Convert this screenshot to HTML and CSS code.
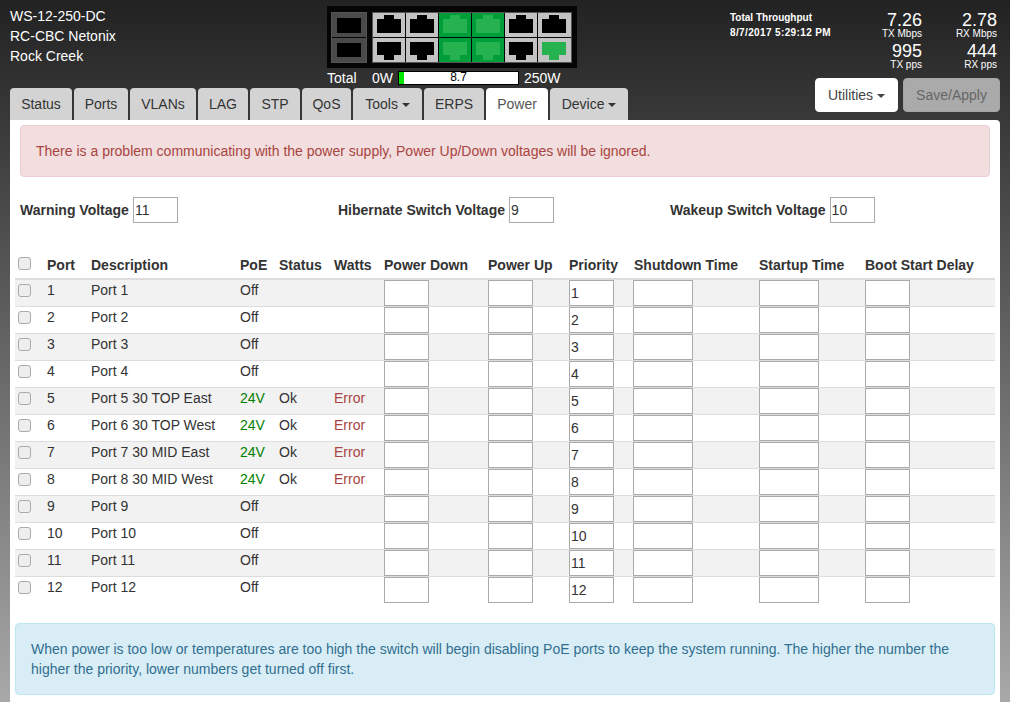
FILE: index.html
```html
<!DOCTYPE html>
<html lang="en">
<head>
<meta charset="utf-8">
<title>WS-12-250-DC</title>
<link rel="stylesheet" href="styles.css">
</head>
<body>
<header class="top">
  <div class="device">
    <div>WS-12-250-DC</div>
    <div>RC-CBC Netonix</div>
    <div>Rock Creek</div>
  </div>
  <div class="switch">
    <svg class="switch-art" width="250" height="62" viewBox="0 0 250 62">
      <defs>
        <path id="up" d="M4 13H11V9H21V13H28V27H4Z"/>
        <path id="down" d="M4 4H28V17H21V22H11V17H4Z"/>
      </defs>
      <rect width="250" height="62" fill="#050505"/>
      <rect x="4.5" y="6.5" width="35" height="50" fill="none" stroke="#555"/>
      <rect x="45.5" y="6.5" width="199" height="50" fill="none" stroke="#555"/>
      <g fill="#4a4a4a">
        <rect x="5" y="7" width="34" height="24"/>
        <rect x="5" y="32" width="34" height="24"/>
      </g>
      <g fill="#000">
        <rect x="10" y="12" width="24" height="15"/>
        <rect x="10" y="37" width="24" height="14"/>
      </g>
      <g fill="#c3c3c3">
        <rect x="46" y="7" width="32" height="24"/>
        <rect x="79" y="7" width="32" height="24"/>
        <rect x="46" y="32" width="32" height="24"/>
        <rect x="79" y="32" width="32" height="24"/>
        <rect x="178" y="7" width="32" height="24"/>
        <rect x="211" y="7" width="33" height="24"/>
        <rect x="178" y="32" width="32" height="24"/>
        <rect x="211" y="32" width="33" height="24"/>
      </g>
      <g fill="#009e3a">
        <rect x="112" y="7" width="32" height="24"/>
        <rect x="145" y="7" width="32" height="24"/>
        <rect x="112" y="32" width="32" height="24"/>
        <rect x="145" y="32" width="32" height="24"/>
      </g>
      <g fill="#000">
        <use href="#up" x="46" y="0"/>
        <use href="#up" x="79" y="0"/>
        <use href="#up" x="178" y="0"/>
        <use href="#up" x="211" y="0"/>
        <use href="#down" x="46" y="32"/>
        <use href="#down" x="79" y="32"/>
        <use href="#down" x="178" y="32"/>
      </g>
      <g fill="#25b24f">
        <use href="#up" x="112" y="0"/>
        <use href="#up" x="145" y="0"/>
        <use href="#down" x="112" y="32"/>
        <use href="#down" x="145" y="32"/>
        <use href="#down" x="211" y="32"/>
      </g>
    </svg>
    <div class="power-row">
      <span class="power-total">Total</span>
      <span class="power-min">0W</span>
      <div class="power-bar"><div class="power-fill"></div><span class="power-value">8.7</span></div>
      <span class="power-max">250W</span>
    </div>
  </div>
  <div class="throughput">
    <div class="tp-title">
      <div>Total Throughput</div>
      <div class="tp-date">8/7/2017 5:29:12 PM</div>
    </div>
    <div class="tp-stats">
      <div class="stat"><div class="stat-num">7.26</div><div class="stat-label">TX Mbps</div></div>
      <div class="stat"><div class="stat-num">2.78</div><div class="stat-label">RX Mbps</div></div>
      <div class="stat"><div class="stat-num">995</div><div class="stat-label">TX pps</div></div>
      <div class="stat"><div class="stat-num">444</div><div class="stat-label">RX pps</div></div>
    </div>
  </div>
</header>
<nav class="navrow">
  <ul class="tabs">
    <li class="tab tab-status">Status</li>
    <li class="tab tab-ports">Ports</li>
    <li class="tab tab-vlans">VLANs</li>
    <li class="tab tab-lag">LAG</li>
    <li class="tab tab-stp">STP</li>
    <li class="tab tab-qos">QoS</li>
    <li class="tab tab-tools">Tools <span class="caret"></span></li>
    <li class="tab tab-erps">ERPS</li>
    <li class="tab tab-power active">Power</li>
    <li class="tab tab-device">Device <span class="caret"></span></li>
  </ul>
  <div class="actions">
    <button class="btn btn-util" type="button">Utilities&nbsp;<span class="caret"></span></button>
    <button class="btn btn-save" type="button">Save/Apply</button>
  </div>
</nav>
<main class="panel">
  <div class="alert">There is a problem communicating with the power supply, Power Up/Down voltages will be ignored.</div>
  <div class="voltages">
    <label class="volt">Warning Voltage <input class="box" type="text" value="11"></label>
    <label class="volt">Hibernate Switch Voltage <input class="box" type="text" value="9"></label>
    <label class="volt">Wakeup Switch Voltage <input class="box" type="text" value="10"></label>
  </div>
  <table class="ports">
    <colgroup>
      <col class="c1"><col class="c2"><col class="c3"><col class="c4"><col class="c5"><col class="c6">
      <col class="c7"><col class="c8"><col class="c9"><col class="c10"><col class="c11"><col class="c12">
    </colgroup>
    <thead>
      <tr>
        <th class="chk"><input class="cb" type="checkbox"></th>
        <th>Port</th><th>Description</th><th>PoE</th><th>Status</th><th>Watts</th>
        <th>Power Down</th><th>Power Up</th><th>Priority</th><th class="shift">Shutdown Time</th><th>Startup Time</th><th>Boot Start Delay</th>
      </tr>
    </thead>
    <tbody>
      <tr><td class="chk"><input class="cb" type="checkbox"></td><td>1</td><td>Port 1</td><td>Off</td><td></td><td></td><td><input class="box" type="text"></td><td><input class="box" type="text"></td><td><input class="box" type="text" value="1"></td><td><input class="box wide" type="text"></td><td><input class="box wide" type="text"></td><td><input class="box" type="text"></td></tr>
      <tr><td class="chk"><input class="cb" type="checkbox"></td><td>2</td><td>Port 2</td><td>Off</td><td></td><td></td><td><input class="box" type="text"></td><td><input class="box" type="text"></td><td><input class="box" type="text" value="2"></td><td><input class="box wide" type="text"></td><td><input class="box wide" type="text"></td><td><input class="box" type="text"></td></tr>
      <tr><td class="chk"><input class="cb" type="checkbox"></td><td>3</td><td>Port 3</td><td>Off</td><td></td><td></td><td><input class="box" type="text"></td><td><input class="box" type="text"></td><td><input class="box" type="text" value="3"></td><td><input class="box wide" type="text"></td><td><input class="box wide" type="text"></td><td><input class="box" type="text"></td></tr>
      <tr><td class="chk"><input class="cb" type="checkbox"></td><td>4</td><td>Port 4</td><td>Off</td><td></td><td></td><td><input class="box" type="text"></td><td><input class="box" type="text"></td><td><input class="box" type="text" value="4"></td><td><input class="box wide" type="text"></td><td><input class="box wide" type="text"></td><td><input class="box" type="text"></td></tr>
      <tr><td class="chk"><input class="cb" type="checkbox"></td><td>5</td><td>Port 5 30 TOP East</td><td class="on">24V</td><td>Ok</td><td class="err">Error</td><td><input class="box" type="text"></td><td><input class="box" type="text"></td><td><input class="box" type="text" value="5"></td><td><input class="box wide" type="text"></td><td><input class="box wide" type="text"></td><td><input class="box" type="text"></td></tr>
      <tr><td class="chk"><input class="cb" type="checkbox"></td><td>6</td><td>Port 6 30 TOP West</td><td class="on">24V</td><td>Ok</td><td class="err">Error</td><td><input class="box" type="text"></td><td><input class="box" type="text"></td><td><input class="box" type="text" value="6"></td><td><input class="box wide" type="text"></td><td><input class="box wide" type="text"></td><td><input class="box" type="text"></td></tr>
      <tr><td class="chk"><input class="cb" type="checkbox"></td><td>7</td><td>Port 7 30 MID East</td><td class="on">24V</td><td>Ok</td><td class="err">Error</td><td><input class="box" type="text"></td><td><input class="box" type="text"></td><td><input class="box" type="text" value="7"></td><td><input class="box wide" type="text"></td><td><input class="box wide" type="text"></td><td><input class="box" type="text"></td></tr>
      <tr><td class="chk"><input class="cb" type="checkbox"></td><td>8</td><td>Port 8 30 MID West</td><td class="on">24V</td><td>Ok</td><td class="err">Error</td><td><input class="box" type="text"></td><td><input class="box" type="text"></td><td><input class="box" type="text" value="8"></td><td><input class="box wide" type="text"></td><td><input class="box wide" type="text"></td><td><input class="box" type="text"></td></tr>
      <tr><td class="chk"><input class="cb" type="checkbox"></td><td>9</td><td>Port 9</td><td>Off</td><td></td><td></td><td><input class="box" type="text"></td><td><input class="box" type="text"></td><td><input class="box" type="text" value="9"></td><td><input class="box wide" type="text"></td><td><input class="box wide" type="text"></td><td><input class="box" type="text"></td></tr>
      <tr><td class="chk"><input class="cb" type="checkbox"></td><td>10</td><td>Port 10</td><td>Off</td><td></td><td></td><td><input class="box" type="text"></td><td><input class="box" type="text"></td><td><input class="box" type="text" value="10"></td><td><input class="box wide" type="text"></td><td><input class="box wide" type="text"></td><td><input class="box" type="text"></td></tr>
      <tr><td class="chk"><input class="cb" type="checkbox"></td><td>11</td><td>Port 11</td><td>Off</td><td></td><td></td><td><input class="box" type="text"></td><td><input class="box" type="text"></td><td><input class="box" type="text" value="11"></td><td><input class="box wide" type="text"></td><td><input class="box wide" type="text"></td><td><input class="box" type="text"></td></tr>
      <tr><td class="chk"><input class="cb" type="checkbox"></td><td>12</td><td>Port 12</td><td>Off</td><td></td><td></td><td><input class="box" type="text"></td><td><input class="box" type="text"></td><td><input class="box" type="text" value="12"></td><td><input class="box wide" type="text"></td><td><input class="box wide" type="text"></td><td><input class="box" type="text"></td></tr>
    </tbody>
  </table>
  <div class="info">When power is too low or temperatures are too high the switch will begin disabling PoE ports to keep the system running. The higher the number the higher the priority, lower numbers get turned off first.</div>
</main>
</body>
</html>
```

FILE: styles.css
```css
* { box-sizing: border-box; }
html, body { margin: 0; padding: 0; height: 702px; overflow: hidden; }
body {
  background: linear-gradient(#222222, #a8a8a8);
  font: 14px/20px "Liberation Sans", Arial, sans-serif;
  color: #333;
}
.top { display: flex; height: 78px; color: #fff; }
.device { width: 327px; padding: 6px 0 0 10px; }
.switch { width: 250px; padding-top: 6px; margin-bottom: -8px; height: 86px; }
.switch-art { display: block; }
.power-row { display: flex; align-items: center; height: 16px; margin-top: 2px; line-height: 16px; }
.power-total { width: 45px; }
.power-min { width: 26px; }
.power-max { margin-left: 5px; }
.power-bar {
  position: relative;
  width: 121px;
  height: 14px;
  background: #fff;
  border: 1px solid #000;
  color: #000;
  font-size: 12px;
  line-height: 11px;
  text-align: center;
}
.power-fill { position: absolute; left: 0; top: 0; bottom: 0; width: 5px; background: #00e600; }
.power-value { position: relative; }
.throughput { flex: 1; display: flex; padding: 10px 13px 0 153px; }
.tp-title { flex: 1; font-size: 10px; font-weight: bold; line-height: 15px; }
.tp-date { letter-spacing: 0.37px; white-space: nowrap; }
.tp-stats { display: grid; grid-template-columns: 75px 75px; grid-auto-rows: 31px; margin-top: 1px; text-align: right; }
.stat-num { font-size: 18px; line-height: 18px; }
.stat-label { font-size: 10px; line-height: 10px; }
.navrow { display: flex; justify-content: space-between; height: 42px; padding: 0 10px; }
.tabs { display: flex; gap: 2px; align-items: flex-end; list-style: none; margin: 0; padding: 0; }
.tab {
  height: 32px;
  line-height: 32px;
  text-align: center;
  background: #d3d3d3;
  border-radius: 4px 4px 0 0;
  color: #333;
}
.tab-status { width: 62px; }
.tab-ports { width: 54px; }
.tab-vlans { width: 66px; }
.tab-lag { width: 50px; }
.tab-stp { width: 50px; }
.tab-qos { width: 49px; }
.tab-tools { width: 69px; }
.tab-erps { width: 60px; }
.tab-power { width: 62px; }
.tab-device { width: 78px; }
.tab.active { background: #fff; color: #555; }
.caret {
  display: inline-block;
  width: 0;
  height: 0;
  vertical-align: middle;
  border-top: 4px solid currentColor;
  border-left: 4px solid transparent;
  border-right: 4px solid transparent;
}
.actions { display: flex; gap: 5px; align-items: flex-start; }
.btn {
  height: 34px;
  padding: 0;
  font: inherit;
  border-radius: 4px;
  border: 1px solid #ccc;
}
.btn-util { width: 83px; background: #fff; color: #444; border-color: #fff; }
.btn-save { width: 97px; background: #aaa; color: #666; border-color: #a5a5a5; }
.panel { height: 582px; margin: 0 10px; background: #fff; padding: 5px 5px 0; border-radius: 0 4px 0 0; }
.alert {
  margin: 0 5px;
  height: 52px;
  padding: 15px;
  background: #f2dede;
  border: 1px solid #ebccd1;
  border-radius: 4px;
  color: #a94442;
}
.voltages { display: grid; grid-template-columns: 318px 332px 1fr; margin: 20px 0 0 5px; height: 26px; }
.volt { display: flex; align-items: center; gap: 4px; font-weight: bold; }
.box {
  display: block;
  width: 45px;
  height: 26px;
  padding: 0 1px;
  border: 1px solid #aaa;
  background: #fff;
  color: #333;
  font: 14px "Liberation Sans", Arial, sans-serif;
}
.box.wide { width: 60px; }
.ports { width: 980px; margin-top: 32px; table-layout: fixed; border-collapse: separate; border-spacing: 0; }
.c1 { width: 32px; } .c2 { width: 44px; } .c3 { width: 149px; } .c4 { width: 39px; }
.c5 { width: 55px; } .c6 { width: 50px; } .c7 { width: 104px; } .c8 { width: 81px; }
.c9 { width: 64px; } .c10 { width: 126px; } .c11 { width: 106px; } .c12 { width: 130px; }
.ports th { padding: 0 0 3px; text-align: left; vertical-align: top; border-bottom: 2px solid #ddd; white-space: nowrap; }
.ports th.shift { padding-left: 1px; }
.ports td { padding: 0; vertical-align: top; border-top: 1px solid #ddd; white-space: nowrap; }
.ports tbody tr:first-child td { border-top: 0; }
.ports tbody tr:nth-child(odd) td { background: #f2f2f2; }
.ports .chk { padding-left: 3px; }
.cb {
  appearance: none;
  display: block;
  width: 13px;
  height: 13px;
  margin: 4px 0 0;
  background: #eee;
  border: 1px solid #aaa;
  border-radius: 3px;
}
.ports th .cb { margin-top: 2px; }
.on { color: #008000; }
.err { color: #a94442; }
.info {
  margin-top: 20px;
  height: 72px;
  padding: 15px;
  background: #d9edf7;
  border: 1px solid #bce8f1;
  border-radius: 4px;
  color: #31708f;
}
```
